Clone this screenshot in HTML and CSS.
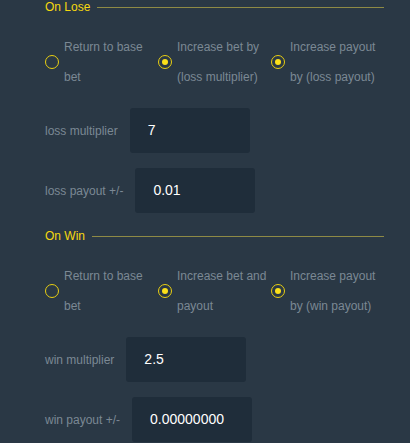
FILE: index.html
```html
<!DOCTYPE html>
<html lang="en">
<head>
    <meta charset="UTF-8">
    <meta name="viewport" content="width=device-width, initial-scale=1.0">
    <title>Auto Bet</title>
    <link rel="stylesheet" href="styles.css">
</head>
<body>

    <!-- On Lose -->
    <section class="section">
        <div class="heading">
            <span class="heading-title">On Lose</span>
            <span class="heading-line"></span>
        </div>
        <div class="radios">
            <label class="radio">
                <span class="dot"></span>
                <span class="radio-text">Return to base bet</span>
            </label>
            <label class="radio checked">
                <span class="dot"></span>
                <span class="radio-text">Increase bet by (loss multiplier)</span>
            </label>
            <label class="radio checked">
                <span class="dot"></span>
                <span class="radio-text">Increase payout by (loss payout)</span>
            </label>
        </div>
        <div class="row">
            <span class="row-label">loss multiplier</span>
            <div class="field">7</div>
        </div>
        <div class="row">
            <span class="row-label">loss payout +/-</span>
            <div class="field">0.01</div>
        </div>
    </section>

    <!-- On Win -->
    <section class="section">
        <div class="heading">
            <span class="heading-title">On Win</span>
            <span class="heading-line"></span>
        </div>
        <div class="radios">
            <label class="radio">
                <span class="dot"></span>
                <span class="radio-text">Return to base bet</span>
            </label>
            <label class="radio checked">
                <span class="dot"></span>
                <span class="radio-text">Increase bet and payout</span>
            </label>
            <label class="radio checked">
                <span class="dot"></span>
                <span class="radio-text">Increase payout by (win payout)</span>
            </label>
        </div>
        <div class="row">
            <span class="row-label">win multiplier</span>
            <div class="field">2.5</div>
        </div>
        <div class="row">
            <span class="row-label">win payout +/-</span>
            <div class="field">0.00000000</div>
        </div>
    </section>

</body>
</html>
```
FILE: styles.css
```css
* {
    margin: 0;
    padding: 0;
    box-sizing: border-box;
}

body {
    font-family: 'Liberation Sans', Arial, sans-serif;
    font-size: 12px;
    background-color: #2a3845;
    color: #7b8894;
    padding: 0 26px 0 45px;
}

.section + .section {
    margin-top: 16px;
}

/* Heading */
.heading {
    display: flex;
    align-items: center;
    height: 14px;
}

.heading-title {
    color: #f5d80f;
    line-height: 14px;
}

.heading-line {
    flex: 1;
    height: 1px;
    margin-left: 7px;
    background-color: #8e8a45;
}

/* Radios */
.radios {
    display: flex;
    margin-top: 18px;
}

.radio {
    display: flex;
    align-items: center;
    width: 113px;
}

.dot {
    width: 14px;
    height: 14px;
    flex-shrink: 0;
    border: 1.5px solid #e9cf12;
    border-radius: 50%;
    display: flex;
    align-items: center;
    justify-content: center;
    margin-right: 5px;
}

.radio.checked .dot::after {
    content: '';
    width: 6px;
    height: 6px;
    border-radius: 50%;
    background-color: #fbe01a;
}

.radio-text {
    width: 92px;
    line-height: 30px;
}

/* Rows */
.row {
    display: flex;
    align-items: center;
    margin-top: 15px;
}

.radios + .row {
    margin-top: 16px;
}

.row-label {
    margin-right: 12px;
}

.field {
    width: 120px;
    height: 45px;
    border-radius: 3px;
    background-color: #1f2d3a;
    color: #ffffff;
    font-size: 14px;
    line-height: 45px;
    padding-left: 18px;
}
```
